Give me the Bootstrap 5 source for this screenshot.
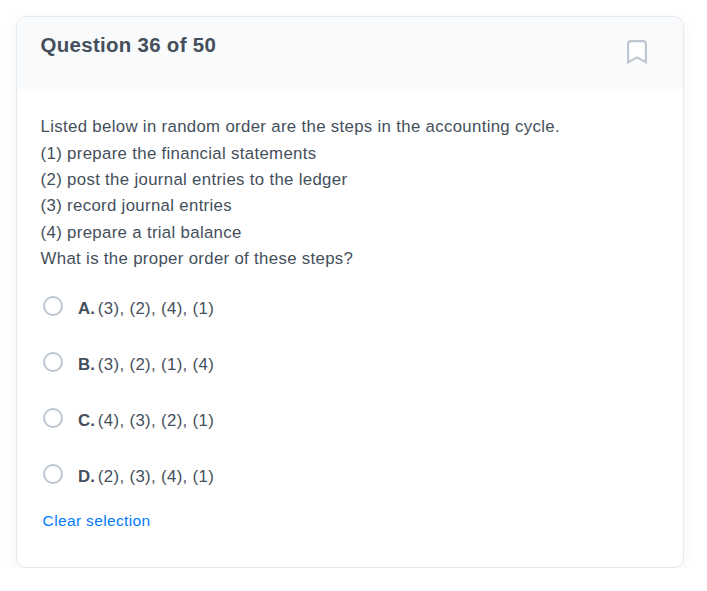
<!DOCTYPE html>
<html lang="en">
<head>
<meta charset="utf-8">
<meta name="viewport" content="width=device-width, initial-scale=1">
<title>Question 36 of 50</title>
<link rel="stylesheet" href="https://cdn.jsdelivr.net/npm/bootstrap@5.3.0/dist/css/bootstrap.min.css">
<style>
body{font-family:"Liberation Sans",Arial,sans-serif;color:#444f5b;background:#fff;letter-spacing:.3px}
.question-card{width:668px;height:552px;margin:16px 0 0 16px;border:1px solid #e6eaee;border-radius:10px;box-shadow:0 4px 14px rgba(0,0,0,.05);color:inherit}
.question-head{height:72px;background:#f8fafc;padding:16px 35.6px 0 23.6px;border-bottom:0}
.question-card .question-head{border-radius:9px 9px 0 0}
.question-title{font-size:20.45px;line-height:24px;font-weight:700}
.bookmark-btn{margin-top:7px}
.question-body{padding:25.2px 23.6px 0}
.question-text{font-size:16.8px;line-height:26.4px;letter-spacing:.33px;margin-bottom:23.8px}
.option{height:56px;padding-left:2.4px;cursor:pointer}
.option .form-check-input{width:20px;height:20px;border:2px solid #bdc7d1;margin:0 15px 0 0}
.option-label{font-size:16.8px;line-height:26px;letter-spacing:.35px}
.option-key{letter-spacing:.25px;margin-right:2.6px}
.clear-btn{font-size:15.5px;line-height:20px;letter-spacing:.36px;color:#007bff;margin:-9px 0 0 2px}
</style>
<script src="https://cdn.jsdelivr.net/npm/bootstrap@5.3.0/dist/js/bootstrap.bundle.min.js"></script>
</head>
<body>
<main class="card question-card">
<header class="card-header question-head d-flex justify-content-between align-items-start">
<h1 class="question-title mb-0">Question 36 of 50</h1>
<button class="btn p-0 border-0 lh-1 bookmark-btn" aria-label="Bookmark"><svg width="20" height="24" viewBox="0 0 20 24" fill="#fff" stroke="#bdc7d1" stroke-width="2.2"><path d="M4.1 1.1h11.8q3 0 3 3v18.2L10 17.4l-8.9 4.9V4.1q0-3 3-3z"/></svg></button>
</header>
<div class="card-body question-body">
<p class="question-text">Listed below in random order are the steps in the accounting cycle.<br>(1) prepare the financial statements<br>(2) post the journal entries to the ledger<br>(3) record journal entries<br>(4) prepare a trial balance<br>What is the proper order of these steps?</p>
<div class="options">
<label class="option d-flex align-items-start"><input class="form-check-input" type="radio" name="answer"><span class="option-label"><b class="option-key">A.</b>(3), (2), (4), (1)</span></label>
<label class="option d-flex align-items-start"><input class="form-check-input" type="radio" name="answer"><span class="option-label"><b class="option-key">B.</b>(3), (2), (1), (4)</span></label>
<label class="option d-flex align-items-start"><input class="form-check-input" type="radio" name="answer"><span class="option-label"><b class="option-key">C.</b>(4), (3), (2), (1)</span></label>
<label class="option d-flex align-items-start"><input class="form-check-input" type="radio" name="answer"><span class="option-label"><b class="option-key">D.</b>(2), (3), (4), (1)</span></label>
</div>
<button class="btn p-0 border-0 d-block clear-btn">Clear selection</button>
</div>
</main>
</body>
</html>
